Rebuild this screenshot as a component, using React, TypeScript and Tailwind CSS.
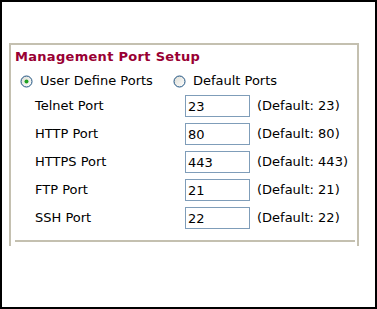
const ports = [
  { label: "Telnet Port", value: "23" },
  { label: "HTTP Port", value: "80" },
  { label: "HTTPS Port", value: "443" },
  { label: "FTP Port", value: "21" },
  { label: "SSH Port", value: "22" },
];

function Radio({ checked }: { checked?: boolean }) {
  return (
    <svg width="13" height="13" viewBox="0 0 13 13" className="shrink-0">
      <defs>
        <linearGradient id="rg" x1="0" y1="0" x2="1" y2="1">
          <stop offset="0" stopColor="#dcdcd4" />
          <stop offset="1" stopColor="#ffffff" />
        </linearGradient>
      </defs>
      <circle cx="6.5" cy="6.5" r="5.5" fill="url(#rg)" stroke="#1c5180" strokeWidth="1" />
      {checked && <circle cx="6.5" cy="6.5" r="2" fill="#21a121" />}
    </svg>
  );
}

export default function App() {
  return (
    <div
      className="w-[377px] h-[309px] border-2 border-black bg-white pt-[41px] pl-[7px] text-[13px] text-black"
      style={{ fontFamily: '"DejaVu Sans", Verdana, sans-serif' }}
    >
      <div className="w-[350px] h-[203px] border-l-2 border-r-2 border-t-2 border-[#c4c0b0] flex flex-col">
        {/* TITLE */}
        <div className="mt-[5px] pl-[4px] h-[14px] leading-[14px] font-bold tracking-[0.3px] text-[#990033]">
          Management Port Setup
        </div>

        {/* RADIOS */}
        <div className="mt-[7px] h-[20px] pl-[9px] flex items-center">
          <Radio checked />
          <span className="ml-[7px]">User Define Ports</span>
          <span className="ml-[20px]">
            <Radio />
          </span>
          <span className="ml-[7px]">Default Ports</span>
        </div>

        {/* PORTS */}
        <div className="mt-[4px] flex flex-col gap-[6px]">
          {ports.map((p) => (
            <div key={p.label} className="h-[22px] flex items-center pl-[24px]">
              <span className="w-[150px]">{p.label}</span>
              <input
                defaultValue={p.value}
                className="w-[65px] h-[22px] border border-[#7f9db9] px-[2px] text-[13px] outline-none"
                style={{ fontFamily: '"DejaVu Sans", Verdana, sans-serif' }}
              />
              <span className="ml-[7px]">(Default: {p.value})</span>
            </div>
          ))}
        </div>

        {/* DIVIDER */}
        <div className="mt-[11px] ml-[4px] w-[340px] border-t-2 border-[#c4c0b0]" />
      </div>
    </div>
  );
}
